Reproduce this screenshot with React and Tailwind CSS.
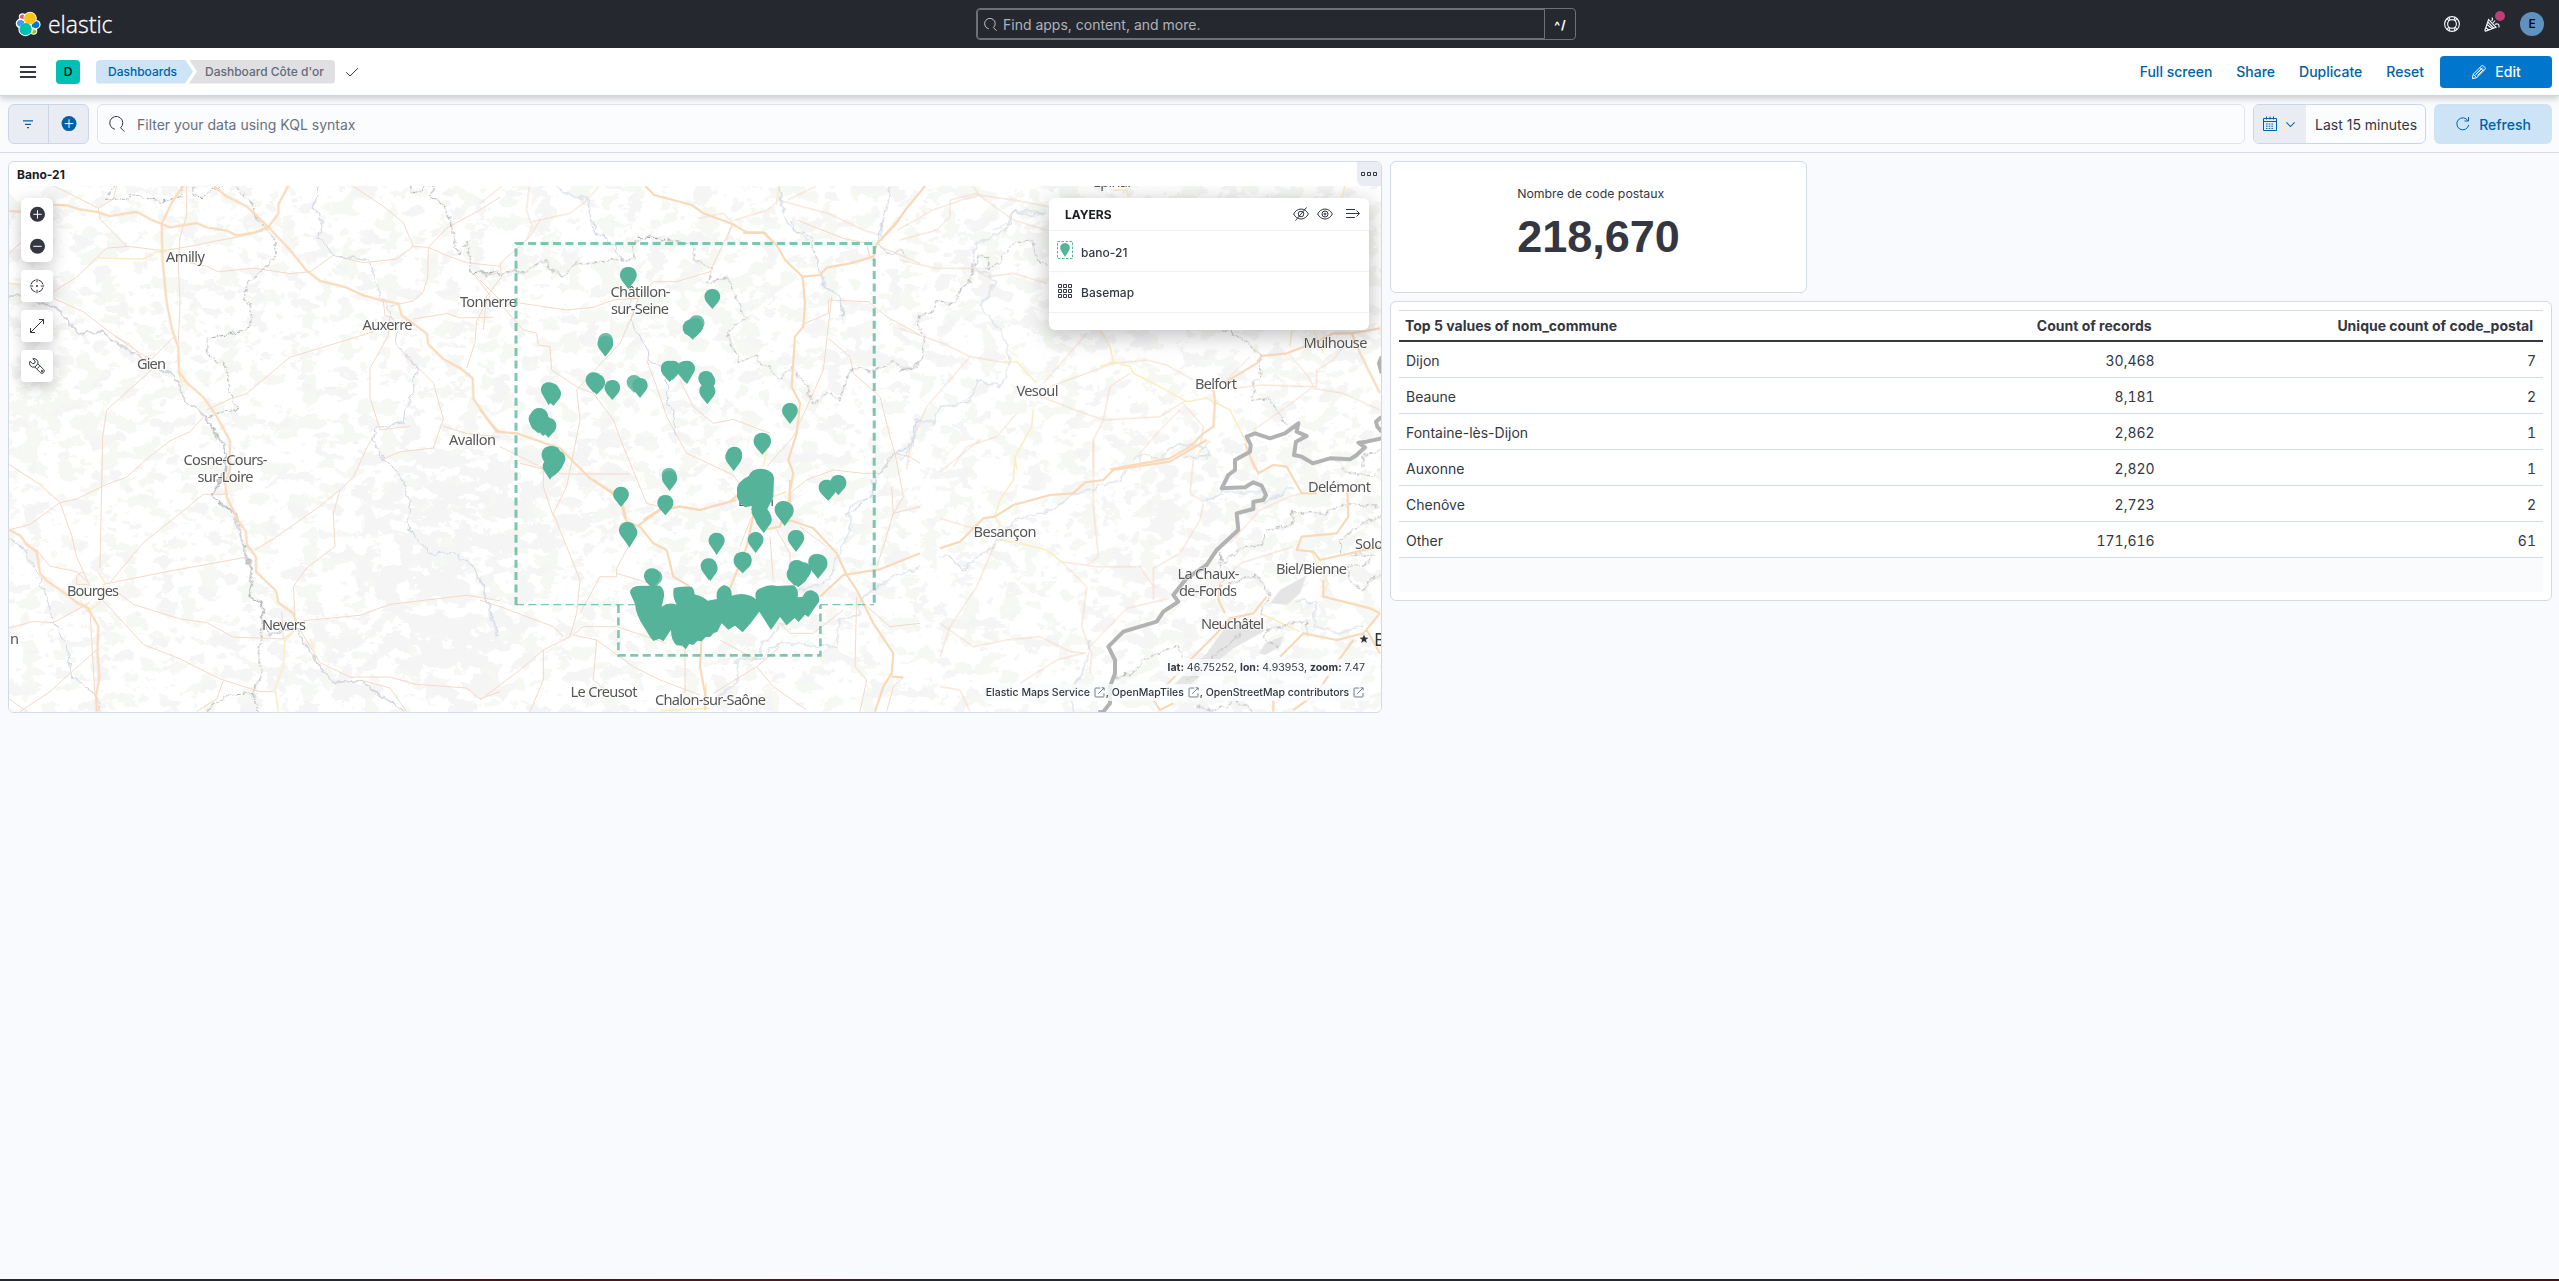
import React from "react";

/* ---------- map data: each sheet keeps its own local grid ---------- */
const SHEETS = [
  {
    t: "translate(0 150) scale(0.33333 0.36351)",
    minor: [
      "160,98 295,160 340,135 350,98", "295,160 300,190 380,265", "27,285 80,240 130,180",
      "160,390 230,350 320,270 385,265 490,277 570,265 650,250 720,238 790,222", "560,98 560,180 540,240 535,320 540,420 535,530",
      "160,408 250,445 345,512 430,565 455,575 520,515", "345,512 390,535 420,565", "455,605 320,715 308,790 300,1150",
      "570,310 620,320 655,335 760,325 870,340 930,335 1000,290 1090,310 1190,300 1240,265 1285,268 1340,290 1400,310 1500,320",
      "1240,265 1210,200 1150,155 1060,100", "1285,268 1340,215 1430,170 1500,130", "1285,268 1283,350 1270,390 1240,415 1170,430",
      "1240,465 1340,450 1380,462 1480,460", "1120,500 960,545 870,570 740,670 690,685 620,715",
      "1170,455 1165,510 1110,600 1110,680 1140,770 1230,760", "1205,560 1255,600 1300,640 1330,740 1300,820 1200,830 1150,850",
      "1330,760 1400,780 1500,790", "610,735 570,775 510,800 440,850 380,900 320,920 230,960 180,970 90,1030 27,1045",
      "27,865 120,920 180,970 215,1060 230,1120 270,1200", "675,947 610,947 540,1000 430,1080 330,1190",
      "310,1195 500,1160 740,1120", "765,1100 820,1070 960,980 1020,935 1060,900 1100,820 1125,780", "1020,935 1000,1000 1005,1090 920,1150 880,1200 885,1280",
      "910,1295 1080,1280 1170,1250 1400,1225 1500,1240", "350,1215 400,1250 540,1290 620,1300 700,1340 850,1345",
      "300,1230 430,1360 540,1400 660,1455 780,1490 820,1490", "270,1245 160,1300 100,1297 27,1315", "110,1100 150,1145 230,1160 265,1190",
      "265,1195 230,1195 230,1170 250,1160", "290,1375 210,1440 150,1490 60,1545", "900,1320 960,1410 1050,1450 1170,1450 1250,1470 1400,1480 1440,1510 1500,1490",
      "1090,1460 1170,1480 1220,1545", "270,1260 275,1350 285,1500 300,1545", "670,1460 650,1510 590,1545", "1420,340 1470,400 1430,470 1425,530 1400,600",
      "27,1510 80,1545", "845,1270 850,1345 880,1325", "1150,415 1155,455 1175,460",
    ],
    yellow: ["290,297 430,300 470,280 500,280", "535,610 548,650", "295,1163 315,1190 298,1245 265,1270 240,1240", "880,1325 855,1350 850,1420 825,1480 835,1545", "930,1345 945,1385", "27,367 60,370"],
    river: [
      "960,98 940,160 970,200 955,240 1000,290 1110,305 1130,370 1150,415 1165,430 1190,500 1185,530 1250,595 1240,670 1215,710 1210,750 1130,765 1120,800 1140,840 1190,880 1230,960 1225,1040 1290,1110 1340,1105 1410,1135 1450,1200 1495,1340",
      "27,1070 70,1095 100,1140 130,1210 165,1300 200,1370 215,1450 290,1500 300,1545",
    ],
    loire: ["27,402 70,400 130,422 165,430 205,470 240,505 300,500 400,560 520,620 550,680 620,740 670,810 680,870 635,950 700,1000 720,1060 755,1160 748,1225 790,1250 790,1300 810,1333 850,1320 890,1320 940,1390 1000,1465 1080,1460 1170,1520 1210,1545"],
    dash: [
      "350,98 315,135 375,135 395,122 485,140 540,130 550,98",
      "580,98 580,130 620,125 640,105 700,98 750,140 770,190 825,240 825,300 740,365 735,400 755,440 750,488 690,505 620,520 620,560 670,590 690,630 685,670 715,710 670,720 620,735 670,820 680,880 635,950 710,1010 760,1170 748,1225 790,1250 785,1330 775,1385 785,1430 760,1500 775,1545",
      "1230,98 1240,120 1270,105 1300,98 1295,130 1335,150 1360,230 1375,290 1400,250 1415,340 1500,335", "620,1545 680,1500 760,1495",
    ],
    major: [
      "27,168 60,170 160,151 205,153 240,164 290,170 330,182 410,170 450,190 510,213 590,201 620,213 680,222 710,235 760,228 805,212 835,175 835,150 865,98",
      "640,98 680,128 740,155 805,212 870,275 920,332 960,360 1035,377 1090,400 1150,415 1195,422 1205,455 1280,505 1285,535 1330,575 1380,600 1418,628 1420,685 1475,755 1500,778",
      "550,98 515,145 485,203 487,300 500,420 515,490 535,545 537,610 560,640 610,680 645,725 690,800 690,880 675,915 680,955 715,1020 738,1050 740,1085 768,1120 768,1160 828,1213 835,1245 880,1275 888,1300",
      "27,1045 60,1060 80,1085 110,1105 120,1165 140,1185 180,1210 235,1248 262,1258 295,1310 292,1380 298,1450 288,1500 290,1545",
    ],
  },
  {
    t: "translate(480 150) scale(0.58038 0.33333)",
    minor: ["38,108 0,160", "85,108 80,180 90,230 80,270", "90,215 155,190 185,150 205,108", "375,205 420,190 435,220 425,270", "440,210 495,180 515,150 555,170 600,190 660,240 690,255", "720,240 780,180 830,150 860,135 920,150 980,170", "860,135 850,110", "530,150 580,108"],
    yellow: ["515,108 510,165", "1490,108 1485,145"],
    river: ["705,108 700,180 690,240 692,270", "515,108 525,200 540,240 565,270", "130,108 150,130 185,150 195,240 215,270", "970,190 920,180 915,220 880,240"],
    dash: ["270,262 320,262 330,270"],
    major: ["285,108 300,135 365,165 385,190 435,222 460,248 490,248 502,270", "767,108 735,175 715,225 690,270"],
  },
  {
    t: "translate(480 220) scale(0.33333)",
    minor: [
      "180,0 150,50 60,130 65,170 20,230 10,330", "0,180 60,240", "110,248 260,270 340,262 400,240 475,235 520,185 590,185 690,155 740,50 760,10",
      "70,262 130,330 170,340 175,375 210,380 215,450 290,500 340,520 400,600 430,680 500,850 540,860",
      "475,235 455,290 420,370 340,455 290,510 300,600 280,700 260,800 220,880", "600,480 640,560 700,610 760,598 870,640",
      "500,420 530,500 560,590 620,700 760,765 790,810", "975,310 1045,280 1045,240 1165,245 1220,290 1320,345",
      "1055,230 1030,450 990,540 940,650 860,740", "1045,355 1110,410 1120,460 1200,530 1230,650 1245,700 1200,760 1150,760 1060,750 980,780 930,820",
      "1245,700 1290,710 1320,730", "1245,700 1270,830 1235,890", "120,730 250,762 450,762", "60,680 190,745 190,800 220,890", "950,0 1090,55 1160,70 1170,115", "1200,80 1320,130",
    ],
    yellow: ["860,690 850,740", "880,830 920,815"],
    river: [
      "340,0 350,40 400,75 425,120", "450,240 460,320 500,380 505,420 560,440 560,530 580,580 585,650",
      "935,0 945,30 990,50 1020,150 1035,195 1080,230 1085,290", "1210,0 1190,60 1220,100 1260,90 1280,110", "1320,600 1300,620 1300,670 1240,700 1200,760 1170,830 1100,890",
    ],
    dash: [
      "0,158 60,165 100,150 130,160 195,115 210,150 255,168 285,130 370,125 465,118 455,75 500,48 640,75 645,120 700,150 680,190 740,170 770,240 795,290 740,340 775,420 830,410 900,478 935,440 985,510 995,555 1050,520 1080,540 1110,450 1200,450 1240,420 1270,450 1320,435",
    ],
    major: [
      "790,38 850,38 890,75 915,120 968,170 1020,165 1040,143 1110,130 1180,110 1190,72 1255,0",
      "968,170 975,250 970,320 945,350 935,500 960,550 950,640 925,720 940,760 928,820 935,890",
      "0,568 50,635 110,640 240,685 330,775 420,830 435,898", "490,900 540,868 600,860 660,870 750,845 790,810",
    ],
  },
  {
    t: "translate(480 480) scale(0.33333)",
    minor: [
      "220,100 300,300 290,400 270,470 190,510 120,570 0,660", "445,200 410,265 410,290 360,290 300,400", "410,280 540,320",
      "280,465 350,480 460,560 540,600 660,645", "280,465 310,440 410,440 560,490", "190,510 190,600 150,695", "350,480 340,600 400,650",
      "0,360 60,380 220,440 250,470", "870,170 880,300", "890,150 930,220 930,260", "960,140 1040,200", "700,640 830,560 900,500", "830,560 880,620 980,690",
      "1240,100 1210,200 1190,260", "1320,80 1240,100 1235,20", "1150,370 1230,440 1320,430", "1130,350 1125,560 1160,600 1140,695", "720,480 830,540",
      "615,500 615,640", "1090,390 1000,460 930,460 870,400", "1270,592 1240,620 1220,695", "815,110 780,200",
    ],
    yellow: ["540,692 690,685", "880,50 920,35", "678,610 678,650"],
    river: [
      "1175,0 1175,50 1110,80 1110,150 1070,230 1050,300 930,340", "1320,260 1240,290 1150,350 1130,410 1080,420 1070,500 900,490 840,535 770,540 770,610 710,650",
      "920,420 840,500 840,520", "0,290 30,400 50,470",
    ],
    dash: [],
    major: [
      "340,0 425,60 440,125 480,140 520,190 560,210 580,290 630,320", "470,140 540,90 600,80 660,90 770,60", "830,60 800,200 750,325",
      "930,0 930,50 900,140 850,150", "900,130 935,122 1000,145 1070,220 1100,285 1130,330 1180,430 1240,520 1235,580 1210,620 1185,695",
      "1020,350 1090,285 1200,268 1320,220", "665,470 660,560 675,640 675,690", "1235,590 1270,592",
    ],
  },
  {
    t: "translate(900 180) scale(0.33333)",
    minor: [
      "0,180 110,150 150,110 150,60 230,40 340,120 440,150", "0,240 110,265 215,265 260,290 340,280 440,310", "0,445 130,490 210,530 330,550",
      "210,530 80,680 30,800 20,868", "430,610 560,460", "450,620 640,550 740,540 800,555 880,600", "400,640 500,680 610,720 780,710 860,660",
      "610,720 580,780 580,870", "610,720 630,620 690,580", "940,630 980,600 1050,530", "1000,625 1080,615 1250,620 1250,570",
      "1165,520 1225,590 1240,620 1160,680 1060,750", "1240,625 1330,640 1440,690", "850,670 910,740 900,800", "350,700 290,770 200,800 160,860",
      "1330,500 1300,540 1250,570", "720,870 720,820 780,750 840,690",
    ],
    yellow: [
      "310,545 350,545 410,610", "600,450 630,500 640,545 690,560 700,580 760,610 860,665 920,655 990,690 1040,790", "400,690 395,740 345,830 350,868",
      "1175,450 1170,500", "600,560 640,545", "1240,450 1260,490 1270,520", "640,30 680,30 685,50",
    ],
    river: [
      "435,95 400,110 340,90 320,150 230,190 215,260 290,300 240,380 310,460 330,550 300,620 240,600 200,670 120,680 100,730 50,720 35,800 0,840",
      "700,840 740,820 780,840 830,790 920,800 925,830 850,830",
    ],
    dash: [
      "0,570 60,550 75,470 55,440 60,405 100,400 110,365 165,370 185,315 210,310 220,260 240,225 260,230 260,270 300,245 340,190 395,178 415,240 445,260",
      "965,450 1020,470 1080,520 1080,590 1060,610 1060,660 1110,655 1160,740", "1440,810 1390,830 1390,860",
    ],
    major: [
      "630,868 810,835 870,800 910,760 940,740 945,660 940,630", "970,610 1070,550 1085,528 1160,520 1240,490 1300,460 1355,460 1380,520 1440,640",
      "1355,460 1440,445", "1035,790 1065,868",
    ],
  },
  {
    t: "translate(940 440) scale(0.33333)",
    minor: [
      "0,95 120,0", "165,310 110,440 30,560 0,650", "360,365 470,380 600,380 640,440 650,440", "370,370 440,440 425,560 455,640 450,700",
      "460,0 460,200 475,350 440,375", "0,550 100,620 200,600 300,590 390,635 440,640", "440,630 560,505 690,475", "790,185 750,160 760,60 810,0",
      "790,190 780,240 720,340 640,385 640,480", "870,310 960,210 1050,170 1085,160", "430,640 350,660 240,730", "1060,320 900,370 840,430", "0,740 60,750 90,815", "0,235 100,265",
    ],
    yellow: ["225,55 220,120 180,180 165,225 180,260", "180,300 240,310 320,330 370,370", "1115,335 1130,370 1165,430 1150,460", "960,520 1080,575"],
    river: [
      "0,350 30,350 70,390 100,360 160,320 230,240 330,210 400,165 540,120 560,85", "790,185 850,155 960,155", "970,195 1060,140",
      "1070,480 1130,490 1120,560 1200,580 1270,555", "450,600 430,700 380,760 400,815",
    ],
    dash: [
      "525,710 580,700 620,655 720,610 725,650", "840,440 950,405 990,470 960,520", "1055,215 1055,255 980,270 960,315 910,320 850,370 835,340 850,420",
      "1055,215 1150,225 1210,190 1320,200", "1320,225 1195,300 1210,350 1300,340 1290,370 1220,380 1230,420 1270,455 1285,425 1320,400",
      "980,560 975,600 1020,630", "980,570 1100,540 1100,590", "1190,60 1230,100 1300,110 1320,90", "740,725 900,580", "770,800 830,815 880,780 940,810",
    ],
    major: [
      "0,325 60,305 100,265 130,235 165,230 220,195 330,165 400,160 435,127 490,120 520,90 690,65 800,0", "935,60 955,100 1000,75 1040,80 1085,160 1130,160",
      "1222,150 1225,230 1190,280 1085,290 1070,330 1120,335 1140,360 1320,320", "1150,420 1150,470 1290,505 1320,520",
      "1320,520 1270,580 1190,600 1090,580 1050,620 1020,650", "980,470 940,520 870,535 830,580 760,650 680,735", "840,430 835,480 855,520", "1280,570 1320,640",
      "1240,600 1200,655", "640,780 660,810 700,790", "1000,780 1000,815", "1060,810 1130,760 1200,655",
    ],
    country: [
      "1325,-5 1280,5 1255,8 1275,22 1250,45 1230,58 1170,55 1118,70 1085,50 1062,45 1068,5 1100,-12 1070,-25 1075,-50 1035,-20 990,-5 945,-20 920,-10 932,15 930,35 885,60 885,90 865,105 845,145 915,142 940,127 965,137 978,165 970,180 940,185 940,207 890,220 895,270 830,330 815,352 800,375 740,415 700,465 715,485 670,515 650,545 550,575 505,620 525,660 525,700 510,740 510,790 490,815 475,817",
      "1325,-250 1317,-230 1325,-200", "1325,-70 1308,-55 1312,-40 1325,-25",
    ],
  },
];

const LAKES = ["1100,405 1080,460 1040,495 990,490 1020,450", "970,575 880,625 790,700 750,735 700,735 800,640 850,570 900,550 970,540", "958,640 975,610 1030,588 1020,620 975,645"];

const LINE_STYLES = {
  minor: { stroke: "#f4d9c7", strokeWidth: 1 },
  yellow: { stroke: "#faeec2", strokeWidth: 1.6 },
  river: { stroke: "#d3d9e5", strokeWidth: 1.1 },
  loire: { stroke: "#d6d7de", strokeWidth: 1.8 },
  dash: { stroke: "#a0a0a0", strokeWidth: 1, strokeDasharray: "4 1.5 1.5 1.5" },
  major: { stroke: "#fad9b8", strokeWidth: 2.2 },
  country: { stroke: "#b2b2b2", strokeWidth: 4 },
};

function Lines({ kind }) {
  return SHEETS.map((s, i) => (
    <g key={i} transform={s.t} fill="none" strokeLinejoin="round" {...LINE_STYLES[kind]}>
      {(s[kind] || []).map((p, j) => (
        <polyline key={j} points={p} vectorEffect="non-scaling-stroke" />
      ))}
    </g>
  ));
}

const LABELS = [
  ["Amilly", 185.5, 261.5, 39], ["Gien", 151.5, 369, 29], ["Auxerre", 387.5, 330, 50], ["Avallon", 472.5, 444.5, 47],
  ["Cosne-Cours-", 225.5, 465, 84], ["sur-Loire", 225.5, 482, 56], ["Bourges", 93, 595.5, 52], ["Nevers", 284, 629.5, 44],
  ["Châtillon-", 640.5, 297, 60], ["sur-Seine", 640, 313.5, 58], ["Le Creusot", 604, 697, 67], ["Chalon-sur-Saône", 710.5, 705, 111],
  ["Vesoul", 1037.5, 395.5, 42], ["Belfort", 1216, 388.5, 42], ["Mulhouse", 1335.5, 348, 64], ["Delémont", 1339.5, 491.5, 63], ["Besançon", 1005, 537, 63],
  ["La Chaux-", 1208.5, 579, 62], ["de-Fonds", 1208, 595.5, 58], ["Biel/Bienne", 1311.5, 573.5, 71], ["Neuchâtel", 1232.5, 629, 63],
  ["Tonnerre", 488.5, 307, 57], ["Epinal", 1112, 187, 38],
];

/* [centre x, top, tip y, width] */
const PINS_N = [
  [445, 141, 207, 48], [697, 207, 267, 45], [650, 286, 346, 45, 1], [646, 295, 352, 45], [632, 300, 352, 46], [638, 297, 359, 48], [377, 339, 400, 42, 1], [376, 348, 410, 45],
  [566, 422, 480, 45], [578, 422, 480, 45], [569, 424, 486, 48], [616, 423, 488, 48], [621, 422, 493, 46], [341, 457, 518, 46], [350, 463, 524, 48], [397, 480, 540, 45],
  [462, 465, 518, 42, 1], [480, 474, 534, 44], [678, 453, 512, 44], [684, 462, 520, 42], [682, 490, 553, 46], [930, 549, 612, 45], [847, 638, 704, 50],
  [763, 680, 742, 44], [761, 686, 753, 48], [567, 744, 800, 42, 1], [569, 752, 813, 44], [556, 825, 886, 46], [423, 800, 861, 45],
  [206, 487, 556, 44], [213, 490, 552, 48], [220, 499, 558, 44], [178, 564, 628, 50], [170, 574, 634, 46], [175, 585, 640, 46], [190, 586, 648, 50], [205, 594, 653, 46],
  [212, 678, 740, 52], [217, 679, 740, 48], [232, 692, 750, 46], [225, 700, 765, 50], [218, 710, 770, 50], [210, 718, 779, 42], [1040, 779, 838, 46], [1045, 782, 843, 46], [1075, 765, 826, 46],
];
const PINS_S = [
  [442, 126, 192, 48], [448, 134, 203, 46], [710, 158, 225, 46], [686, 235, 300, 46], [691, 244, 303, 42], [788, 215, 280, 52], [827, 156, 219, 45], [948, 150, 216, 47],
  [910, 63, 130, 50], [914, 65, 138, 52], [1008, 222, 285, 44, 1], [1014, 223, 296, 54], [950, 240, 300, 46], [968, 247, 310, 48], [945, 258, 318, 48], [955, 260, 322, 52],
  [525, 270, 323, 42, 1], [516, 265, 325, 46], [851, 95, 159, 46],
];

function Pin({ p }) {
  const [cx, top, tip, w, pale] = p;
  const r = w / 2;
  const cy = top + r;
  return (
    <path
      d={`M${cx} ${tip}L${cx - r * 0.8} ${cy + r * 0.72}C${cx - r * 1.35} ${cy} ${cx - r * 0.95} ${top} ${cx} ${top}C${cx + r * 0.95} ${top} ${cx + r * 1.35} ${cy} ${cx + r * 0.8} ${cy + r * 0.72}Z`}
      opacity={pale ? 0.85 : 1}
    />
  );
}

function Patches({ id, color, seed, freq }) {
  return (
    <filter id={id} x="0" y="0" width="100%" height="100%" colorInterpolationFilters="sRGB">
      <feTurbulence type="fractalNoise" baseFrequency={freq} numOctaves="5" seed={seed} result="n" />
      <feColorMatrix in="n" values="0 0 0 0 0  0 0 0 0 0  0 0 0 0 0  1 0 0 0 0" result="t" />
      <feComposite in="SourceGraphic" in2="t" operator="arithmetic" k2="0.4" k3="1" />
      <feComponentTransfer result="m">
        <feFuncA type="linear" slope="30" intercept="-19.2" />
      </feComponentTransfer>
      <feFlood floodColor={color} />
      <feComposite in2="m" operator="in" />
    </filter>
  );
}

function MapCanvas() {
  return (
    <svg className="block h-full w-full" viewBox="9 186 1372 526" fontFamily='"Noto Sans", sans-serif'>
      <defs>
        <Patches id="wood" color="#f6f8f3" seed={4} freq="0.05 0.065" />
        <Patches id="relief" color="#f5f5f6" seed={11} freq="0.045 0.06" />
        <filter id="wiggle" x="-5%" y="-5%" width="110%" height="110%">
          <feTurbulence type="fractalNoise" baseFrequency="0.12" numOctaves="2" seed="2" />
          <feDisplacementMap in="SourceGraphic" scale="8" xChannelSelector="R" yChannelSelector="G" />
        </filter>
        <filter id="soft">
          <feGaussianBlur stdDeviation="22" />
        </filter>
      </defs>
      <rect x="9" y="186" width="1372" height="526" fill="#fff" />
      <g filter="url(#wood)">
        <rect x="9" y="186" width="1372" height="526" fill="#000" opacity="0.2" />
        <g filter="url(#soft)" fill="#000">
          <ellipse cx="60" cy="410" rx="70" ry="60" opacity="0.3" />
          <ellipse cx="680" cy="300" rx="110" ry="50" opacity="0.25" />
          <ellipse cx="1160" cy="240" rx="170" ry="60" opacity="0.25" />
          <ellipse cx="760" cy="540" rx="110" ry="50" opacity="0.15" />
          <ellipse cx="1300" cy="500" rx="70" ry="60" opacity="0.2" />
        </g>
      </g>
      <g filter="url(#relief)">
        <rect x="9" y="186" width="1372" height="526" fill="#000" opacity="0.04" />
        <g filter="url(#soft)" fill="#000">
          <ellipse cx="440" cy="540" rx="85" ry="110" opacity="0.45" />
          <ellipse cx="560" cy="490" rx="60" ry="70" opacity="0.4" />
          <ellipse cx="350" cy="660" rx="140" ry="40" opacity="0.3" />
          <ellipse cx="470" cy="650" rx="70" ry="50" opacity="0.35" />
          <ellipse cx="1170" cy="550" rx="70" ry="80" opacity="0.3" />
          <ellipse cx="960" cy="280" rx="60" ry="50" opacity="0.2" />
          <ellipse cx="850" cy="335" rx="40" ry="20" opacity="0.35" />
        </g>
      </g>
      <g transform={SHEETS[5].t} fill="#e5e5e5">
        {LAKES.map((p) => (
          <polygon key={p} points={p} />
        ))}
      </g>
      <Lines kind="minor" />
      <Lines kind="yellow" />
      <g filter="url(#wiggle)">
        <Lines kind="river" />
        <Lines kind="loire" />
        <Lines kind="dash" />
      </g>
      <Lines kind="major" />
      <Lines kind="country" />

      <g fontSize="14.6" fill="#565656" textAnchor="middle" stroke="#fff" strokeWidth="1.5" strokeOpacity="0.7" paintOrder="stroke">
        {LABELS.map(([t, x, y, w]) => (
          <text key={t} x={x} y={y} textLength={w}>
            {t}
          </text>
        ))}
        <text x="19" y="644" textAnchor="end">un</text>
        <text x="1355" y="548.5" textAnchor="start" textLength="28">Solo</text>
        <text x="774" y="506" textAnchor="end">Dijon</text>
        <text x="1374" y="645.5" fontSize="18" fill="#333" textAnchor="start">B</text>
      </g>
      <path fill="#333" d="M1364 634.5l1.2 3 3.3.2-2.6 2 .9 3.2-2.8-1.8-2.8 1.8.9-3.2-2.6-2 3.3-.2z" />

      <g fill="none" stroke="#54b399" strokeOpacity="0.75" strokeDasharray="8 4.45">
        <path d="M516 605V243.6H874.2V605" strokeWidth="3" />
        <path d="M516 604.7H635M820 604.7H874" strokeWidth="1.3" />
        <path d="M618.4 605V655.4H820.4V605" strokeWidth="2.6" />
      </g>
      <g fill="#54b399">
        <g transform="translate(480 220) scale(0.33333)">
          {PINS_N.map((p, i) => (
            <Pin key={i} p={p} />
          ))}
          <path d="M771 805Q773 785 806 768Q815 745 845 746Q880 750 882 775L880 830Q872 848 862 868Q876 885 873 903L851 938L832 912L815 880V858L795 862Q776 848 771 830Z" />
        </g>
        <g transform="translate(480 480) scale(0.33333)">
          {PINS_S.map((p, i) => (
            <Pin key={i} p={p} />
          ))}
          <path d="M450 338Q452 317 480 317L540 317Q556 330 551 355L545 380Q565 365 590 374Q575 345 582 325Q600 317 635 320Q645 330 643 343Q670 350 683 362L711 357Q705 325 732 315Q757 320 755 347Q790 335 818 350L828 358Q820 330 845 323Q870 312 890 318L940 316Q957 325 953 352L968 350Q978 328 995 331Q1022 340 1017 365L985 411L975 404L956 426L944 414L920 436L900 411L873 450L838 395L812 430L788 457L765 437L745 449L725 430L712 455L700 460L690 472L678 470L665 484L653 482L640 495L628 492L617 508L607 497L590 496Q572 480 573 450L550 484L538 476L520 483L510 470L490 438Q468 405 465 372Z" />
        </g>
      </g>
    </svg>
  );
}

/* ---------- icons ---------- */
function Icon({ size = 16, className = "", sw = 1, children }) {
  return (
    <svg width={size} height={size} viewBox="0 0 16 16" fill="none" stroke="currentColor" strokeWidth={sw} className={"shrink-0 " + className}>
      {children}
    </svg>
  );
}
const SearchIcon = (p) => (
  <Icon {...p}>
    <path d="M6.200 13.600A6.500 6.500 0 1 1 11.900 12.100M11.900 12.100L15.700 15.900" transform="translate(-.3 -.3)" />
  </Icon>
);
const PopoutIcon = () => (
  <Icon size={11} sw={1.3} className="mx-[1px] inline-block text-[#69707d]">
    <path d="M9 1.500H2.500a1 1 0 0 0-1 1v11a1 1 0 0 0 1 1h11a1 1 0 0 0 1-1V9M6 10L14.500 1.500M11 1.200h3.800V5" />
  </Icon>
);

function TopBar() {
  return (
    <header className="flex h-12 shrink-0 items-center bg-[#25282f] pr-[15px] pl-4">
      <div className="flex w-[960px] items-center">
        <svg width="100" height="26" viewBox="16 11 100 26" className="overflow-visible">
          <circle cx="30" cy="18.500" r="6.800" fill="#fff" />
          <circle cx="25.500" cy="29" r="7.200" fill="#fff" />
          <circle cx="20.700" cy="23.500" r="5" fill="#fff" />
          <circle cx="22.500" cy="17" r="3.700" fill="#fff" />
          <circle cx="36" cy="24.600" r="4.600" fill="#fff" />
          <circle cx="33.600" cy="31" r="3.700" fill="#fff" />
          <circle cx="30" cy="18.400" r="5.900" fill="#fec514" />
          <circle cx="25.600" cy="29.200" r="6.100" fill="#00bfb3" />
          <path d="M16.900 23.600a3.900 3.900 0 0 1 4.200-3.700l3.400 1.600-1 2.200-4 3a4 4 0 0 1-2.600-3.100z" fill="#36a2ef" />
          <path d="M19.800 18a2.700 2.700 0 0 1 4.300-2.800 6.500 6.500 0 0 0-.5 4z" fill="#f04e98" />
          <path d="M39.400 24.400a3.900 3.900 0 0 1-4 3.800L32 26.800v-2.200l4.400-3.700a4 4 0 0 1 3 3.500z" fill="#0077cc" />
          <path d="M36.400 30.400a2.700 2.700 0 0 1-4.300 2.800 6.500 6.500 0 0 0 .6-4z" fill="#93c90e" />
          <text x="48" y="33.400" fill="#fff" stroke="#fff" strokeWidth="0.3" fontFamily='"Open Sans", sans-serif' fontWeight="300" fontSize="24" textLength="64.500" lengthAdjust="spacingAndGlyphs">elastic</text>
        </svg>
      </div>
      <div className="flex h-8 w-[600px] rounded-[4px] border border-[#6f7176]">
        <div className="flex flex-1 items-center gap-1.5 rounded-l-[3px] border border-[#6f7176] pl-1.5 text-[14px] text-[#b0b3ba]">
          <SearchIcon size={13} className="text-[#dfe5ef]" />
          <span>Find apps, content, and more.</span>
        </div>
        <div className="flex w-[30px] items-center justify-center pt-0.5 text-[12px] font-bold text-white">
          <span className="pt-0.5">^</span>
          <span className="ml-px">/</span>
        </div>
      </div>
      <div className="flex flex-1 items-center justify-end text-[#f0f3f8]">
        <Icon sw={1.150}>
          <circle cx="8" cy="8" r="7.400" />
          <circle cx="8" cy="8" r="4.400" />
          <path d="M4.900 1.300l1 2.600M3 2.600l2 2.200M11.100 1.300l-1 2.600M13 2.600l-2 2.200M4.900 14.700l1-2.600M3 13.400l2-2.200M11.100 14.700l-1-2.600M13 13.400l-2-2.200" />
        </Icon>
        <div className="relative mr-5 ml-6">
          <Icon sw={1.150}>
            <path d="M4.600 3.500L.9 14.300c-.2.5.3 1 .8.8L12 11.300zM3 8.500l5.200 4.200M3.800 6l5.800 6M2 11.800l3 2.300M7.500 4.800c1-.6 1.200-2 .5-3.300M9 7l2-2.500M11 8.500c1-1 3.800-1 4 1v2" />
          </Icon>
          <span className="absolute -top-[5px] left-[11px] size-[10px] rounded-full bg-[#bc3f78]" />
        </div>
        <span className="flex size-6 items-center justify-center rounded-full bg-[#6092c0] text-[12px] font-medium text-black">E</span>
      </div>
    </header>
  );
}

function NavBar() {
  return (
    <nav className="z-10 flex h-12 shrink-0 items-center border-b border-[#ced5e3] bg-white pr-[7px] pl-5 shadow-[0_3px_6px_rgba(90,95,105,0.28)]">
      <Icon className="text-[#343741]" sw={2}>
        <path d="M0 3h16M0 8h16M0 13h16" />
      </Icon>
      <span className="ml-5 flex size-6 items-center justify-center rounded-[4px] bg-[#00bfb3] text-[12px] font-medium text-black">D</span>
      <div className="ml-4 flex h-6 text-[12px] font-medium">
        <span className="flex w-[97px] items-center rounded-l-[4px] bg-[#cce4f5] pl-3 text-[#0061a6] [clip-path:polygon(0_0,89px_0,100%_50%,89px_100%,0_100%)]">
          Dashboards
        </span>
        <span className="-ml-1 flex w-[146px] items-center rounded-r-[4px] bg-[#e0e0e3] pl-4 text-[#646a77] [clip-path:polygon(0_0,100%_0,100%_100%,0_100%,8px_50%)]">
          Dashboard Côte d'or
        </span>
      </div>
      <Icon className="ml-[9px] text-[#343741]">
        <path d="M2.200 8.300l3.800 3.700 8-7.800" />
      </Icon>
      <div className="ml-auto flex items-center gap-6 text-[14px] font-medium text-[#0061a6]">
        <span>Full screen</span>
        <span>Share</span>
        <span>Duplicate</span>
        <span>Reset</span>
        <span className="-ml-2 flex h-8 w-28 items-center justify-center gap-2 rounded-[4px] bg-[#0077cc] text-white">
          <Icon>
            <path d="M1.400 14.600l.8-4.400 8.100-8a1.800 1.800 0 0 1 2.500 0l1 1a1.800 1.800 0 0 1 0 2.500l-8.100 8zM2.200 10.200l3.500 3.500M3.700 11.700l8-8M9 3.500l3.500 3.500M5 10l6-6M6.500 11.500l6-6" />
          </Icon>
          Edit
        </span>
      </div>
    </nav>
  );
}

function FilterBar() {
  return (
    <div className="flex h-[57px] shrink-0 items-center gap-2 border-b border-[#d3dae6] bg-[#fafbfd] pr-[7px] pl-2 text-[14px]">
      <div className="flex h-10 w-[81px] rounded-[6px] border border-[#cdd6e8] bg-[#e9edf3] text-[#0061a6]">
        <span className="flex flex-1 items-center justify-center border-r border-[#cdd6e8]">
          <Icon sw={1.200} className="-ml-px">
            <path d="M3 4.900h10M5 8.400h6M7 11.700h2" />
          </Icon>
        </span>
        <span className="flex flex-1 items-center justify-center">
          <Icon>
            <circle cx="8" cy="7.600" r="7.500" fill="currentColor" stroke="none" />
            <path d="M8 3.300v8.600M3.700 7.600h8.600" stroke="#fff" />
          </Icon>
        </span>
      </div>
      <div className="flex h-10 flex-1 items-center gap-3 rounded-[6px] border border-[#e0e3e9] bg-[#fbfcfd] pl-[11px] text-[#69707d]">
        <SearchIcon className="text-[#343741]" />
        <span className="pt-px">Filter your data using KQL syntax</span>
      </div>
      <div className="flex h-10 w-[173px] overflow-hidden rounded-[6px] border border-[#cdd6e8] bg-[#fbfcfd]">
        <span className="flex w-[52px] items-center justify-center gap-2 bg-[#e9edf3] text-[#0061a6]">
          <Icon className="-ml-0.5">
            <path d="M1.500 2.500h13v12h-13zM1.500 5.500h13M4.500 .5v3M8 .5v3M11.500 .5v3" />
            <path d="M4 8h8M4 10.200h8M4 12.400h8" strokeDasharray="1.6 1.1" />
          </Icon>
          <Icon size={11} sw={1.500} className="-ml-px">
            <path d="M2 5l6 6 6-6" />
          </Icon>
        </span>
        <span className="flex items-center pt-px pl-[9px] text-[#343741]">Last 15 minutes</span>
      </div>
      <div className="flex h-10 w-[118px] items-center justify-center gap-2 rounded-[6px] bg-[#cce4f5] font-medium text-[#0061a6]">
        <Icon>
          <path d="M13 4.800A6 6 0 1 0 13.700 9M13.500 1v4h-4" />
        </Icon>
        <span className="pt-px">Refresh</span>
      </div>
    </div>
  );
}

function MapButton({ children }) {
  return <span className="flex h-8 w-8 items-center justify-center rounded-[4px] bg-white shadow-[0_4px_14px_rgba(60,60,70,0.28)]">{children}</span>;
}

function MapControls() {
  return (
    <div className="absolute top-3 left-3 flex flex-col gap-2 text-[#343741]">
      <div className="flex h-16 w-8 flex-col items-center justify-around rounded-[6px] bg-white shadow-[0_4px_16px_rgba(60,60,70,0.3)]">
        <Icon>
          <circle cx="8.500" cy="8.300" r="7.500" fill="currentColor" stroke="none" />
          <path d="M8.500 4.100v8.400M4.300 8.300h8.400" stroke="#fff" />
        </Icon>
        <Icon>
          <circle cx="8.500" cy="8.300" r="7.500" fill="currentColor" stroke="none" />
          <path d="M4.300 8.300h8.400" stroke="#fff" />
        </Icon>
      </div>
      <MapButton>
        <Icon>
          <path d="M6.500 2a6.200 6.200 0 0 0-4.500 4.500M9.500 2a6.200 6.200 0 0 1 4.500 4.500M2 9.500a6.200 6.200 0 0 0 4.500 4.500M14 9.500a6.200 6.200 0 0 1-4.500 4.500M8 .8v3.400M8 11.800v3.400M.8 8h3.400M11.800 8h3.400" />
          <circle cx="8" cy="8" r="1" fill="currentColor" stroke="none" />
        </Icon>
      </MapButton>
      <MapButton>
        <Icon>
          <path d="M1.500 14.500L14.500 1.500M10 1.500h4.500V6M1.500 10v4.500H6" />
        </Icon>
      </MapButton>
      <MapButton>
        <Icon>
          <path d="M1 3.200l2.500 2.500 2.200-.5.500-2.200L3.800.8a4 4 0 0 1 5 5l5.800 5.600a2.200 2.200 0 0 1-3.200 3.200L5.800 9a4 4 0 0 1-5-5.200zM8.800 5.800L6 9M10.500 8.200l-2 2.300" />
          <circle cx="13" cy="13" r=".8" />
        </Icon>
      </MapButton>
    </div>
  );
}

function LayersPanel() {
  return (
    <div className="absolute top-3 right-3 h-[132px] w-80 rounded-[6px] bg-white text-[12px] text-[#343741] shadow-[0_5px_22px_rgba(60,60,70,0.35)]">
      <div className="flex h-[33px] items-center border-b border-[#eef1f5] pr-2 pl-4">
        <span className="mr-auto pt-0.5 font-bold text-[#1a1c21]">LAYERS</span>
        <Icon>
          <path d="M.6 8C2.300 4.800 5 3 8 3s5.700 1.800 7.400 5c-1.700 3.200-4.400 5-7.400 5S2.300 11.200.6 8zM2.500 14.500L13.500 1.500" />
          <circle cx="8" cy="8" r="2.800" />
        </Icon>
        <Icon className="ml-2">
          <path d="M.6 8C2.300 4.800 5 3 8 3s5.700 1.800 7.400 5c-1.700 3.200-4.400 5-7.400 5S2.300 11.200.6 8z" />
          <circle cx="8" cy="8" r="3" />
          <circle cx="8" cy="8" r="1" />
        </Icon>
        <Icon className="ml-3">
          <path d="M1 3.500h9M1 7.500h13.500M1 11.500h9M11.500 4.500l3 3-3 3" />
        </Icon>
      </div>
      <div className="flex h-[41px] items-center gap-2 border-b border-[#eef1f5] pt-1 pl-2 font-medium">
        <svg width="16" height="20" viewBox="0 0 16 20" className="-mt-1.5">
          <rect x=".5" y="1.500" width="15" height="17" fill="none" stroke="#54b399" strokeDasharray="2.5 1.5" />
          <path d="M8 17L3.900 10.600C2 6.800 4 3 8 3s6 3.800 4.100 7.600z" fill="#54b399" />
        </svg>
        bano-21
      </div>
      <div className="flex h-[41px] items-center gap-2 border-b border-[#eef1f5] pt-0.5 pl-2 font-medium">
        <Icon className="-mt-1">
          <path d="M1.500 1.500h3v3h-3zM6.500 1.500h3v3h-3zM11.500 1.500h3v3h-3zM1.500 6.500h3v3h-3zM6.500 6.500h3v3h-3zM11.500 6.500h3v3h-3zM1.500 11.500h3v3h-3zM6.500 11.500h3v3h-3zM11.500 11.500h3v3h-3z" />
        </Icon>
        Basemap
      </div>
    </div>
  );
}

function MapPanel() {
  return (
    <section className="flex h-[552px] w-[1374px] flex-col overflow-hidden rounded-[6px] border border-[#d3dae6] bg-white">
      <div className="flex h-6 shrink-0 items-center justify-between pl-2">
        <h2 className="pt-0.5 text-[12px] font-bold text-[#1a1c21]">Bano-21</h2>
        <span className="flex h-6 w-6 items-center justify-center rounded-bl-[6px] bg-[#e9edf3] text-[#343741]">
          <Icon>
            <path d="M.5 6.500h3v3h-3zM6.500 6.500h3v3h-3zM12.500 6.500h3v3h-3z" />
          </Icon>
        </span>
      </div>
      <div className="relative min-h-0 flex-1 overflow-hidden">
        <MapCanvas />
        <MapControls />
        <LayersPanel />
        <div className="absolute right-3 bottom-[11px] flex flex-col items-end gap-2 text-[10.5px] leading-[17px] whitespace-nowrap text-[#343741]">
          <div className="bg-[#fafbfd]/80 px-1">
            <b>lat:</b> 46.75252, <b>lon:</b> 4.93953, <b>zoom:</b> 7.47
          </div>
          <div className="flex items-center bg-[#fafbfd]/80 px-1 font-medium">
            Elastic Maps Service&nbsp; <PopoutIcon />,&nbsp;OpenMapTiles&nbsp; <PopoutIcon />,&nbsp;OpenStreetMap contributors&nbsp; <PopoutIcon />
          </div>
        </div>
      </div>
    </section>
  );
}

function MetricPanel() {
  return (
    <section className="flex h-[132px] w-[417px] justify-center rounded-[6px] border border-[#d3dae6] bg-white">
      <div className="flex flex-col pt-[22px] text-[#343741]">
        <div className="text-[12.3px] leading-5">Nombre de code postaux</div>
        <div className="mt-[8px] font-['Liberation_Sans',sans-serif] text-[45px] leading-[50px] font-bold">218,670</div>
      </div>
    </section>
  );
}

const ROWS = [
  ["Dijon", "30,468", "7"],
  ["Beaune", "8,181", "2"],
  ["Fontaine-lès-Dijon", "2,862", "1"],
  ["Auxonne", "2,820", "1"],
  ["Chenôve", "2,723", "2"],
  ["Other", "171,616", "61"],
];

function TablePanel() {
  return (
    <section className="h-[300px] rounded-[6px] border border-[#d3dae6] bg-white p-2">
      <div className="h-[282px] border-t border-[#d3dae6] bg-[#fafbfd] text-[14px] text-[#343741]">
        <div className="grid h-[31px] grid-cols-3 items-center border-b-2 border-[#343741] bg-white font-bold">
          <span className="pl-1.5">Top 5 values of nom_commune</span>
          <span className="pr-[10px] text-right">Count of records</span>
          <span className="pr-[10px] text-right">Unique count of code_postal</span>
        </div>
        {ROWS.map(([name, count, unique]) => (
          <div key={name} className="grid h-9 grid-cols-3 items-center border-b border-[#d3dae6] bg-white pt-0.5">
            <span className="pl-[7px]">{name}</span>
            <span className="pr-[7px] text-right tabular-nums">{count}</span>
            <span className="pr-[7px] text-right tabular-nums">{unique}</span>
          </div>
        ))}
      </div>
    </section>
  );
}

export default function App() {
  return (
    <div className="flex h-[1281px] w-full flex-col overflow-hidden bg-[#f9fafe] font-['Inter',sans-serif]">
      <TopBar />
      <NavBar />
      <FilterBar />
      <main className="flex min-h-0 flex-1 items-start gap-2 pt-2 pr-[7px] pl-2">
        <MapPanel />
        <div className="flex flex-1 flex-col gap-2">
          <MetricPanel />
          <TablePanel />
        </div>
      </main>
      <footer className="h-0.5 shrink-0 bg-[linear-gradient(90deg,#25282f_0%,#25282f_14%,#4f1218_20%,#4f1a22_30%,#25282f_36%,#25282f_70%,#38152c_80%,#4a1015_92%,#4a1015_100%)]" />
    </div>
  );
}
